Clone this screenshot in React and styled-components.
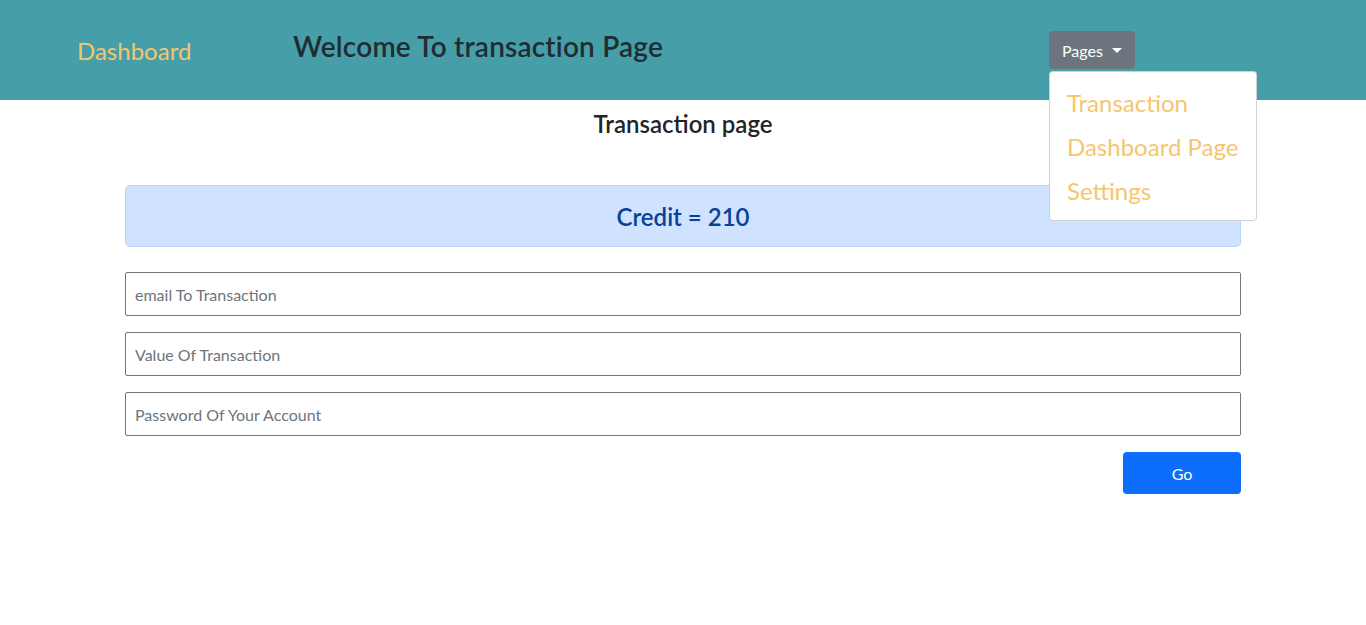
import React from "react";
import styled, { createGlobalStyle } from "styled-components";

const GlobalStyle = createGlobalStyle`
    * {
        box-sizing: border-box;
    }

    body {
        margin: 0;
        background: #fff;
        font-family: "Segoe UI", Lato, "Noto Sans", sans-serif;
        color: #212529;
    }
`

const Header = styled.header`
    height: 100px;
    background: #459ea8;
    display: flex;
    align-items: center;
    padding-left: 77px;
`

const Brand = styled.a`
    width: 216px;
    padding-top: 1px;
    color: #f6c66e;
    font-size: 24px;
    text-decoration: none;
    cursor: pointer;
`

const Title = styled.h3`
    width: 756px;
    margin: 0 0 8px 0;
    font-size: 28px;
    font-weight: 600;
    letter-spacing: 0.2px;
    color: #1f2d33;
`

const DropdownWrap = styled.div`
    position: relative;
`

const ToggleButton = styled.button`
    height: 38px;
    padding: 0 13px;
    display: flex;
    align-items: center;
    gap: 9px;
    background: #6c757d;
    color: #fff;
    border: none;
    border-radius: 4px;
    font-family: inherit;
    font-size: 16px;
    cursor: pointer;
`

const Caret = styled.span`
    width: 0;
    height: 0;
    border-left: 5px solid transparent;
    border-right: 5px solid transparent;
    border-top: 5px solid #fff;
    margin-top: 1px;
`

const Menu = styled.ul`
    position: absolute;
    top: 40px;
    left: 0;
    width: 208px;
    margin: 0;
    padding: 9px 0 7px;
    list-style: none;
    background: #fff;
    border: 1px solid rgba(0, 0, 0, 0.18);
    border-radius: 4px;
    z-index: 10;
`

const MenuItem = styled.li`
    padding: 4px 17px;
    line-height: 36px;
    font-size: 24px;
    color: #f6c66e;
    white-space: nowrap;
    cursor: pointer;
`

const Main = styled.main`
    width: 1116px;
    margin: 0 auto;
    display: flex;
    flex-direction: column;
`

const PageTitle = styled.h4`
    margin: 9px 0 0;
    text-align: center;
    font-size: 24px;
    font-weight: 600;
    line-height: 29px;
`

const Alert = styled.div`
    margin-top: 47px;
    padding: 17px 16px 15px;
    background: #cfe2ff;
    border: 1px solid #b6d4fe;
    border-radius: 5px;
    color: #084298;
    text-align: center;
    font-size: 24px;
    font-weight: 600;
    line-height: 28px;
`

const Form = styled.form`
    margin-top: 25px;
    display: flex;
    flex-direction: column;
    gap: 16px;
`

const Input = styled.input`
    height: 44px;
    padding: 0 9px;
    border: 1px solid #767676;
    border-radius: 2px;
    font-family: inherit;
    font-size: 16px;
    color: #212529;

    &::placeholder {
        color: #6c757d;
    }
`

const SubmitButton = styled.button`
    align-self: flex-end;
    width: 118px;
    height: 42px;
    background: #0d6efd;
    color: #fff;
    border: none;
    border-radius: 4px;
    font-family: inherit;
    font-size: 16px;
    cursor: pointer;
`

const pages = ["Transaction", "Dashboard Page", "Settings"];

const App = () => {
    return (
        <>
            <GlobalStyle />
            <Header>
                <Brand>Dashboard</Brand>
                <Title>Welcome To transaction Page</Title>
                <DropdownWrap>
                    <ToggleButton type="button">
                        Pages <Caret />
                    </ToggleButton>
                    <Menu>
                        {pages.map(p => <MenuItem key={p}>{p}</MenuItem>)}
                    </Menu>
                </DropdownWrap>
            </Header>

            <Main>
                <PageTitle>Transaction page</PageTitle>
                <Alert>Credit = 210</Alert>
                <Form onSubmit={e => e.preventDefault()}>
                    <Input type="email" placeholder="email To Transaction" />
                    <Input type="number" placeholder="Value Of Transaction" />
                    <Input type="password" placeholder="Password Of Your Account" />
                    <SubmitButton type="submit">Go</SubmitButton>
                </Form>
            </Main>
        </>
    )
}

export default App;
